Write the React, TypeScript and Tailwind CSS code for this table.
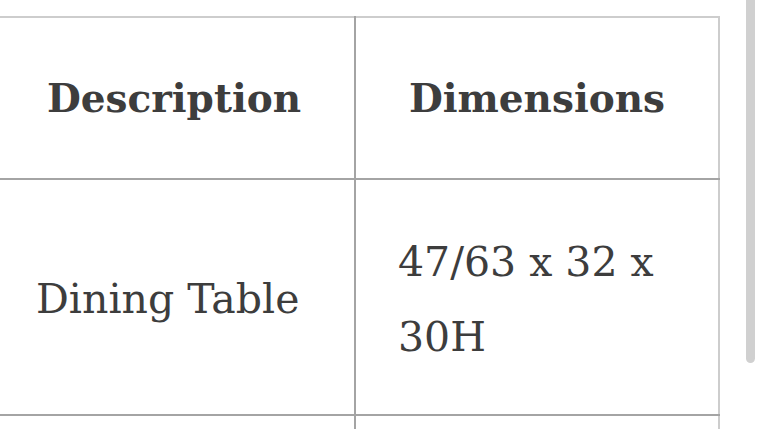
const rows = [{ description: "Dining Table", dimensions: "47/63 x 32 x 30H" }];

export default function App() {
  return (
    <div className="flex h-[429px] w-[764px] overflow-hidden bg-white text-[#3d3d3d] [font-family:'DejaVu_Serif',serif]">
      <div className="flex-1 overflow-hidden pt-[16px]">
        <table className="-ml-[6px] w-[726px] table-fixed border-collapse text-[41px] leading-[75px]">
          <colgroup>
            <col className="w-[361px]" />
            <col />
          </colgroup>
          <thead>
            <tr>
              <th className="h-[162px] border-t-2 border-b-2 border-r-2 border-t-[#cdcdcd] border-b-[#a4a4a4] border-r-[#a4a4a4] px-[40px] text-center align-middle font-bold text-[39px]">
                Description
              </th>
              <th className="h-[162px] border-t-2 border-b-2 border-r-2 border-t-[#cdcdcd] border-b-[#a4a4a4] border-r-[#cdcdcd] px-[40px] text-center align-middle font-bold text-[39px]">
                Dimensions
              </th>
            </tr>
          </thead>
          <tbody>
            {rows.map((row) => (
              <tr key={row.description}>
                <td className="border-b-2 border-r-2 border-b-[#a4a4a4] border-r-[#a4a4a4] px-[42px] pt-[44px] pb-[40px] text-left align-middle">
                  {row.description}
                </td>
                <td className="border-b-2 border-r-2 border-b-[#a4a4a4] border-r-[#cdcdcd] px-[42px] pt-[45px] pb-[39px] text-left align-middle">
                  {row.dimensions}
                </td>
              </tr>
            ))}
            <tr>
              <td className="h-[80px] border-r-2 border-r-[#a4a4a4]" />
              <td className="h-[80px] border-r-2 border-r-[#cdcdcd]" />
            </tr>
          </tbody>
        </table>
      </div>
      <div className="mr-[9px] h-[363px] w-[9px] shrink-0 rounded-b-full bg-[#d0d0d0]" />
    </div>
  );
}
